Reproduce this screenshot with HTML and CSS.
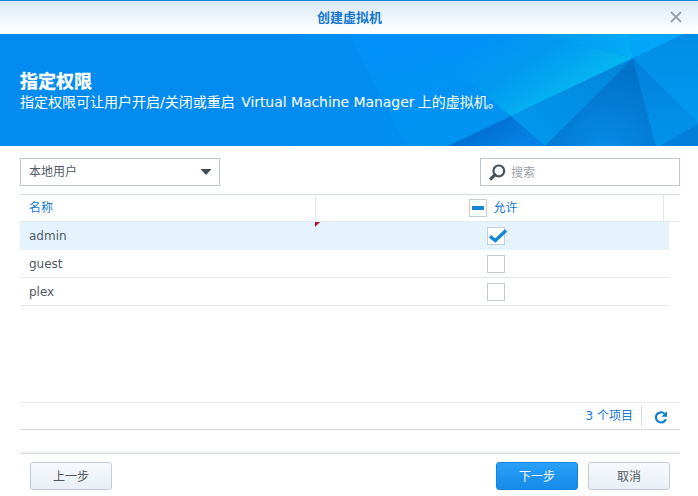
FILE: index.html
```html
<!DOCTYPE html>
<html lang="zh-CN">
<head>
<meta charset="utf-8">
<title>创建虚拟机</title>
<link rel="stylesheet" href="styles.css">
</head>
<body>
<div class="window">
  <header class="titlebar">
    <h1 class="title">创建虚拟机</h1>
    <svg class="close" width="12" height="12" viewBox="0 0 12 12"><path d="M1 1L11 11M11 1L1 11" fill="none" stroke="#9aa2a9" stroke-width="1.9"/></svg>
  </header>
  <section class="banner">
    <svg class="facets" width="698" height="112" viewBox="0 0 698 112">
      <defs>
        <linearGradient id="plain" gradientUnits="userSpaceOnUse" x1="270" x2="400" y1="0" y2="0"><stop offset="0" stop-color="#038bf0"/><stop offset="1" stop-color="#038ef3"/></linearGradient>
        <linearGradient id="left" gradientUnits="userSpaceOnUse" x1="400" y1="0" x2="440" y2="112"><stop offset="0" stop-color="#0390fa"/><stop offset="1" stop-color="#0293f0"/></linearGradient>
        <linearGradient id="glow" gradientUnits="userSpaceOnUse" x1="505" y1="-10" x2="555" y2="68"><stop offset="0" stop-color="#0390f8"/><stop offset=".5" stop-color="#029bf0"/><stop offset="1" stop-color="#04b4f0"/></linearGradient>
        <linearGradient id="top" x1="0" x2="1"><stop offset="0" stop-color="#0297ee"/><stop offset="1" stop-color="#02acf6"/></linearGradient>
        <linearGradient id="mid" gradientUnits="userSpaceOnUse" x1="633" y1="24" x2="530" y2="110"><stop offset="0" stop-color="#0284d8"/><stop offset="1" stop-color="#0298ee"/></linearGradient>
        <radialGradient id="deep" gradientUnits="userSpaceOnUse" cx="605" cy="118" r="85"><stop offset="0" stop-color="#078de6"/><stop offset=".6" stop-color="#037cd4"/><stop offset="1" stop-color="#0271c8"/></radialGradient>
        <linearGradient id="low" gradientUnits="userSpaceOnUse" x1="480" y1="95" x2="495" y2="122"><stop offset="0" stop-color="#0270d3"/><stop offset="1" stop-color="#0582e6"/></linearGradient>
        <linearGradient id="right" x1="0" x2="0" y1="0" y2="1"><stop offset="0" stop-color="#0280da"/><stop offset="1" stop-color="#0294ec"/></linearGradient>
        <linearGradient id="far" x1="0" x2="0" y1="0" y2="1"><stop offset="0" stop-color="#028de5"/><stop offset="1" stop-color="#0298f2"/></linearGradient>
      </defs>
      <rect width="698" height="112" fill="url(#plain)"/>
      <path d="M350 0H533L511 82L448 112H406Z" fill="url(#left)"/>
      <path d="M435 18L420 0H533L633 24L511 82Z" fill="url(#glow)"/>
      <path d="M533 0H629L633 24Z" fill="url(#top)"/>
      <path d="M629 0H684L633 24Z" fill="#01a6fa"/>
      <path d="M684 0H698V89L633 24Z" fill="url(#far)"/>
      <path d="M633 24L511 82L545 112Z" fill="url(#mid)"/>
      <path d="M511 82L448 112H545Z" fill="url(#low)"/>
      <path d="M633 24L545 112H656Z" fill="url(#deep)"/>
      <path d="M633 24L698 89V112H656Z" fill="url(#right)"/>
      <path d="M698 90V112H660Z" fill="#027fd8"/>
    </svg>
    <div class="banner-text">
      <h2>指定权限</h2>
      <p>指定权限可让用户开启/关闭或重启 <span class="product">Virtual Machine Manager</span> 上的虚拟机。</p>
    </div>
  </section>
  <main class="content">
    <div class="toolbar">
      <div class="select"><span>本地用户</span><svg width="12" height="6" viewBox="0 0 12 6"><path d="M0.5 0H11.5L6 6Z" fill="#414b55"/></svg></div>
      <div class="search"><svg width="17" height="17" viewBox="0 0 17 17"><circle cx="9.8" cy="6.9" r="5.4" fill="none" stroke="#485058" stroke-width="2.2"/><path d="M5.9 10.8L2 14.7" stroke="#485058" stroke-width="3.2" stroke-linecap="round"/></svg><span>搜索</span></div>
    </div>
    <div class="grid-head">
      <div class="col-name">名称</div>
      <div class="col-allow"><span class="box partial"></span><span>允许</span></div>
    </div>
    <div class="rows">
      <div class="row selected"><div class="col-name">admin</div><div class="col-allow"><i class="dirty"></i><span class="box"><svg class="check" width="20" height="16" viewBox="0 0 20 16"><path d="M2 8.4L7.4 12.6L18 2.6" fill="none" stroke="#138ad8" stroke-width="3.4"/></svg></span></div></div>
      <div class="row"><div class="col-name">guest</div><div class="col-allow"><span class="box"></span></div></div>
      <div class="row"><div class="col-name">plex</div><div class="col-allow"><span class="box"></span></div></div>
    </div>
    <div class="status">
      <span class="count">3 个项目</span>
      <svg class="refresh" width="14" height="14" viewBox="0 0 14 14"><path d="M10.8 3.9A5.1 5.1 0 1 0 11.9 9" fill="none" stroke="#1380d2" stroke-width="2.2"/><path d="M13 1.2V6.7H7.4Z" fill="#1380d2"/></svg>
    </div>
  </main>
  <footer class="footer">
    <button class="btn">上一步</button>
    <button class="btn primary">下一步</button>
    <button class="btn">取消</button>
  </footer>
</div>
</body>
</html>
```
FILE: styles.css
```css
* { box-sizing: border-box; }
body {
  margin: 0;
  background: #fff;
  color: #505a64;
  font: 12px/20px "DejaVu Sans", "Noto Sans CJK SC", sans-serif;
}
h1, h2, p { margin: 0; }
svg { display: block; flex: none; }
.window {
  width: 698px;
  height: 496px;
  display: flex;
  flex-direction: column;
  overflow: hidden;
}
.titlebar {
  height: 34px;
  border-top: 1px solid #1682d5;
  background: linear-gradient(#d9e9f7, #fff 90%);
  display: grid;
  grid-template-columns: 1fr auto 1fr;
  align-items: center;
  padding: 0 16px;
}
.title {
  grid-column: 2;
  font-size: 13px;
  line-height: 18px;
  color: #1478d0;
  padding-left: 1px;
}
.close { justify-self: end; margin-top: -1px; }
.banner {
  height: 112px;
  display: grid;
  background: #038bf0;
  color: #fff;
}
.facets, .banner-text { grid-area: 1 / 1; }
.banner-text { padding: 37px 20px 0; z-index: 1; }
h2 { font-size: 18px; line-height: 22px; -webkit-text-stroke: 0.3px #fff; }
.banner-text p { font-size: 14px; line-height: 18px; white-space: nowrap; }
.product { margin: 0 -1px 0 2px; letter-spacing: -0.06px; }
.content {
  height: 284px;
  padding: 12px 18px 0 20px;
  display: flex;
  flex-direction: column;
}
.toolbar { display: flex; justify-content: space-between; height: 28px; }
.select, .search {
  width: 200px;
  height: 28px;
  border: 1px solid #bdc8d3;
  display: flex;
  align-items: center;
  padding: 0 7px 0 8px;
}
.select { justify-content: space-between; }
.search { gap: 5px; color: #9aa2aa; }
.search span { padding-top: 1px; }
.grid-head {
  height: 28px;
  margin-top: 8px;
  border-top: 1px solid #d3dee7;
  border-bottom: 1px solid #e3e9ee;
  display: flex;
  line-height: 26px;
  color: #1478d0;
}
.col-name { width: 296px; padding-left: 9px; border-right: 1px solid transparent; }
.grid-head .col-name { border-color: #dfe6ec; }
.col-allow {
  width: 348px;
  padding-right: 10px;
  display: flex;
  justify-content: center;
  align-items: center;
  gap: 6px;
  border-right: 1px solid transparent;
}
.grid-head .col-allow { border-color: #dfe6ec; padding-right: 0; padding-left: 8px; padding-bottom: 1px; }
.box {
  width: 18px;
  height: 18px;
  border: 1px solid #c3ccd4;
  background: #fff;
  display: flex;
  align-items: center;
  justify-content: center;
}
.partial::before { content: ""; width: 12px; height: 4px; background: #1785d6; }
.row .box { margin-left: 23px; }
.check { margin: 0 -3px 0 1px; }
.rows { width: 649px; height: 180px; }
.row {
  height: 28px;
  border-bottom: 1px solid #e3e9ee;
  display: flex;
  line-height: 29px;
}
.row .col-allow { position: relative; }
.selected { background: #e5f3fd; border-color: #e5f3fd; }
.dirty {
  position: absolute;
  left: -1px;
  top: 0;
  border-top: 5px solid #b5122a;
  border-right: 5px solid transparent;
}
.status {
  height: 28px;
  border-top: 1px solid #e6e9eb;
  border-bottom: 1px solid #d8dcdf;
  display: flex;
  align-items: center;
  justify-content: flex-end;
  padding-right: 12px;
  color: #1478d0;
}
.count { padding-right: 8px; border-right: 1px solid #d5dde4; margin-right: 12px; }
.refresh { margin-top: 2px; }
.footer {
  margin: 21px 18px 0 20px;
  height: 45px;
  border-top: 2px solid #f0f2f3;
  box-shadow: inset 0 1px #d9dddf;
  padding: 9px 10px 0;
  display: flex;
  gap: 10px;
}
.btn {
  width: 82px;
  height: 28px;
  border: 1px solid #c2ccd9;
  border-radius: 3px;
  background: linear-gradient(#f7f9fc, #e9eff6);
  color: #505a64;
  font: inherit;
  padding: 1px 0 0;
}
.primary {
  margin-left: auto;
  border-color: #1284dc;
  background: linear-gradient(#2ba0f8, #168be8);
  color: #fff;
}
```
